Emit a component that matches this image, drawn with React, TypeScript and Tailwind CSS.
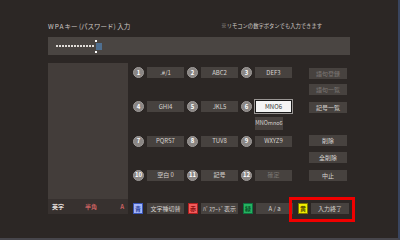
import React from "react";

const font = { fontFamily: '"Noto Sans CJK JP", "Noto Sans", sans-serif' };

function Circle({ n }: { n: number }) {
  return (
    <div className="w-[11px] h-[11px] rounded-full bg-[#8a8684] border border-[#a09c9a] flex items-center justify-center text-[6px] font-bold text-white leading-none shrink-0">
      {n}
    </div>
  );
}

function Key({ label, dim, active }: { label: string; dim?: boolean; active?: boolean }) {
  if (active) {
    return (
      <div className="relative w-[38px] h-[13px] -my-[1px] bg-[#f4f4f4] border border-[#1a1a1a] ring-1 ring-[#9a9694] flex items-center justify-center text-[6px] text-[#333] leading-none">
        {label}
        <div className="absolute left-[-1px] top-[16px] w-[28px] h-[13px] bg-[#48423f] flex items-center justify-center text-[5.5px] text-[#d8d4d0] leading-none">
          MNOmno6
        </div>
      </div>
    );
  }
  return (
    <div
      className={`w-[37px] h-[11px] bg-[#47423f] flex items-center justify-center text-[6px] leading-none ${
        dim ? "text-[#7c7774]" : "text-[#d8d4d0]"
      }`}
    >
      {label}
    </div>
  );
}

function Cell({ n, label, dim, active }: { n: number; label: string; dim?: boolean; active?: boolean }) {
  return (
    <div className="flex items-center gap-[3px] h-[11px]">
      <Circle n={n} />
      <Key label={label} dim={dim} active={active} />
    </div>
  );
}

function SideBtn({ label, dim }: { label: string; dim?: boolean }) {
  return (
    <div
      className={`w-[38px] h-[11px] bg-[#47423f] flex items-center justify-center text-[6px] leading-none ${
        dim ? "text-[#7c7774]" : "text-[#d8d4d0]"
      }`}
    >
      {label}
    </div>
  );
}

function ColorBtn({ label, bg, border, color }: { label: string; bg: string; border: string; color: string }) {
  return (
    <div
      className={`w-[10px] h-[11px] border ${bg} ${border} ${color} flex items-center justify-center text-[6px] font-bold leading-none shrink-0`}
    >
      {label}
    </div>
  );
}

export default function App() {
  const keys = [
    { n: 1, label: ".#/1" },
    { n: 2, label: "ABC2" },
    { n: 3, label: "DEF3" },
    { n: 4, label: "GHI4" },
    { n: 5, label: "JKL5" },
    { n: 6, label: "MNO6", active: true },
    { n: 7, label: "PQRS7" },
    { n: 8, label: "TUV8" },
    { n: 9, label: "WXYZ9" },
    { n: 10, label: "空白 0" },
    { n: 11, label: "記号" },
    { n: 12, label: "確定", dim: true },
  ];
  return (
    <div
      className="relative w-[400px] h-[240px] bg-[#2c2725] border-r-2 border-b-2 border-r-[#39455f] border-b-[#47464c] overflow-hidden"
      style={font}
    >
      <div className="flex flex-col pt-[22px] pl-[48px]">
        <div className="flex items-center justify-between w-[274px] h-[9px] leading-none">
          <span className="text-[6.5px] text-[#cfcac6]">
            <span className="tracking-[1px]">WPA</span>キー (パスワード) 入力
          </span>
          <span className="text-[5.3px] text-[#cfcac6]">
            <span className="text-[#bdb8b4]">※</span>リモコンの数字ボタンでも入力できます
          </span>
        </div>
        <div className="mt-[6px] w-[302px] h-[18px] bg-[#4a4542] flex items-center pl-[8px]">
          <div className="flex gap-[1px]">
            {Array.from({ length: 13 }).map((_, i) => (
              <span key={i} className="w-[2px] h-[2px] bg-[#e0dcd8]" />
            ))}
          </div>
          <div className="relative ml-[2px] w-[6px] h-[7px] bg-[#4f6f90]">
            <span className="absolute left-[-1px] top-[-3px] w-[2px] h-[2px] bg-white" />
            <span className="absolute left-[-1px] bottom-[-3px] w-[2px] h-[2px] bg-white" />
          </div>
        </div>
        <div className="mt-[8px] flex gap-[5px]">
          <div className="w-[80px] h-[151px] flex flex-col">
            <div className="flex-1 bg-[#433d3a]" />
            <div className="h-[15px] bg-[#37312f] flex items-center px-[4px] text-[6px] leading-none">
              <span className="text-[#e0dcd8] font-bold">英字</span>
              <span className="ml-[21px] text-[#c86060] font-bold">半角</span>
              <span className="ml-auto text-[#c86060] font-bold">A</span>
            </div>
          </div>
          <div className="flex flex-col pt-[4px]">
            <div className="flex">
              <div className="grid grid-cols-[51px_51px_51px] gap-x-[3px] gap-y-[23px]">
                {keys.map((k) => (
                  <Cell key={k.n} n={k.n} label={k.label} dim={k.dim} active={k.active} />
                ))}
              </div>
              <div className="ml-[17px] flex flex-col">
                <div className="mt-[1px]"><SideBtn label="語句登録" dim /></div>
                <div className="mt-[5px]"><SideBtn label="語句一覧" dim /></div>
                <div className="mt-[7px]"><SideBtn label="記号一覧" /></div>
                <div className="mt-[22px]"><SideBtn label="削除" /></div>
                <div className="mt-[6px]"><SideBtn label="全削除" /></div>
                <div className="mt-[7px]"><SideBtn label="中止" /></div>
              </div>
            </div>
            <div className="mt-[22px] flex items-center">
              <ColorBtn label="青" bg="bg-[#a3b6fa]" border="border-[#3a56b8]" color="text-[#2a3f9a]" />
              <div className="ml-[4px]"><Key label="文字種切替" /></div>
              <div className="ml-[4px]"><ColorBtn label="赤" bg="bg-[#f25a5a]" border="border-[#b02020]" color="text-[#8a1010]" /></div>
              <div className="ml-[3px]"><Key label="ﾊﾟｽﾜｰﾄﾞ表示" /></div>
              <div className="ml-[5px]"><ColorBtn label="緑" bg="bg-[#25b360]" border="border-[#107040]" color="text-[#0a4a25]" /></div>
              <div className="ml-[3px]"><Key label="A / a" /></div>
              <div className="ml-[5px]"><ColorBtn label="黄" bg="bg-[#f2f000]" border="border-[#807a00]" color="text-[#5a5200]" /></div>
              <div className="ml-[3px]"><SideBtn label="入力終了" /></div>
            </div>
          </div>
        </div>
      </div>
      <div className="absolute left-[289px] top-[197px] w-[66px] h-[25px] border-[3px] border-[#f00000]" />
    </div>
  );
}
